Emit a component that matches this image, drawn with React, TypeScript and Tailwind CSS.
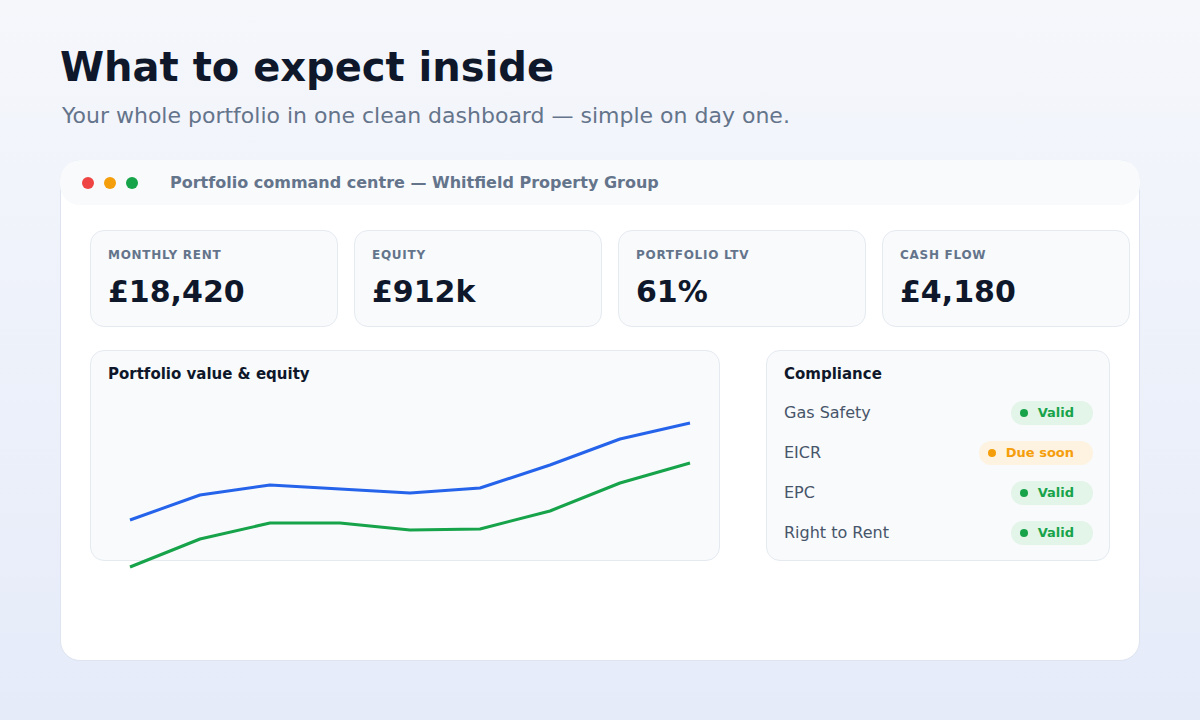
import React from "react";

const font = { fontFamily: '"DejaVu Sans", Verdana, sans-serif' };

const stats = [
  { label: "Monthly rent", value: "£18,420" },
  { label: "Equity", value: "£912k" },
  { label: "Portfolio LTV", value: "61%" },
  { label: "Cash flow", value: "£4,180" },
];

const checks: { name: string; status: "valid" | "due" }[] = [
  { name: "Gas Safety", status: "valid" },
  { name: "EICR", status: "due" },
  { name: "EPC", status: "valid" },
  { name: "Right to Rent", status: "valid" },
];

// chart points, x in panel pixels, y relative to the svg top
const valueLine = [136, 111, 101, 105, 109, 104, 81, 55, 39];
const equityLine = [183, 155, 139, 139, 146, 145, 127, 99, 79];

const toPoints = (ys: number[]) =>
  ys.map((y, i) => `${40 + i * 70},${y}`).join(" ");

const StatusPill = ({ status }: { status: "valid" | "due" }) => {
  const valid = status === "valid";
  return (
    <span
      className={`flex items-center h-6 rounded-full pl-[9px] pr-[19px] text-[13px] font-bold ${
        valid ? "bg-[#e3f4e8] text-[#16a34a]" : "bg-[#fef2e0] text-[#f59e0b]"
      }`}
    >
      <span
        className={`w-2 h-2 rounded-full mr-[10px] ${
          valid ? "bg-[#16a34a]" : "bg-[#f59e0b]"
        }`}
      />
      {valid ? "Valid" : "Due soon"}
    </span>
  );
};

export default function App() {
  return (
    <div
      className="w-[1200px] h-[720px] overflow-hidden bg-gradient-to-b from-[#f5f7fb] to-[#e5ebf9] px-[60px] pt-[43px]"
      style={font}
    >
      <h1 className="text-[40px] leading-[48px] font-bold text-[#0f172a]">
        What to expect inside
      </h1>
      <p className="mt-[11px] text-[22px] leading-[28px] text-[#64748b] pl-[2px]">
        Your whole portfolio in one clean dashboard — simple on day one.
      </p>

      <div className="mt-[30px] h-[501px] bg-white rounded-[20px] border border-[#dde4f0]">
        <div className="-m-px h-[45px] flex items-center bg-[#f8fafc] rounded-[20px] pl-[22px]">
          <div className="flex gap-[10px]">
            <span className="w-3 h-3 rounded-full bg-[#ef4444]" />
            <span className="w-3 h-3 rounded-full bg-[#f59e0b]" />
            <span className="w-3 h-3 rounded-full bg-[#16a34a]" />
          </div>
          <span className="ml-[32px] text-[16px] font-bold text-[#64748b]">
            Portfolio command centre — Whitfield Property Group
          </span>
        </div>

        <div className="px-[29px] pt-[26px]">
          <div className="grid grid-cols-4 gap-4 w-[1040px]">
            {stats.map((s) => (
              <div
                key={s.label}
                className="h-[97px] rounded-[14px] bg-[#f8fafc] border border-[#e5eaf1] px-[17px] pt-[16px]"
              >
                <div className="text-[12px] leading-4 font-bold uppercase tracking-[0.06em] text-[#64748b]">
                  {s.label}
                </div>
                <div className="mt-[11px] text-[30px] leading-[36px] font-bold text-[#0f172a]">
                  {s.value}
                </div>
              </div>
            ))}
          </div>

          <div className="mt-[23px] flex gap-[46px]">
            <div className="w-[630px] h-[211px] rounded-[14px] bg-[#f8fafc] border border-[#e5eaf1] flex flex-col">
              <div className="px-[17px] pt-[13px] text-[15px] leading-5 font-bold text-[#0f172a]">
                Portfolio value &amp; equity
              </div>
              <svg
                width="630"
                height="176"
                viewBox="0 0 630 176"
                className="overflow-visible -ml-px"
              >
                <polyline
                  points={toPoints(valueLine)}
                  fill="none"
                  stroke="#2563eb"
                  strokeWidth="3"
                  strokeLinejoin="round"
                />
                <polyline
                  points={toPoints(equityLine)}
                  fill="none"
                  stroke="#16a34a"
                  strokeWidth="3"
                  strokeLinejoin="round"
                />
              </svg>
            </div>

            <div className="w-[344px] h-[211px] rounded-[14px] bg-[#f8fafc] border border-[#e5eaf1] pl-[17px] pr-[16px] pt-[13px]">
              <div className="text-[15px] leading-5 font-bold text-[#0f172a]">
                Compliance
              </div>
              <div className="mt-[17px] flex flex-col gap-4">
                {checks.map((c) => (
                  <div key={c.name} className="flex items-center justify-between h-6">
                    <span className="text-[16px] text-[#475569]">{c.name}</span>
                    <StatusPill status={c.status} />
                  </div>
                ))}
              </div>
            </div>
          </div>
        </div>
      </div>
    </div>
  );
}
